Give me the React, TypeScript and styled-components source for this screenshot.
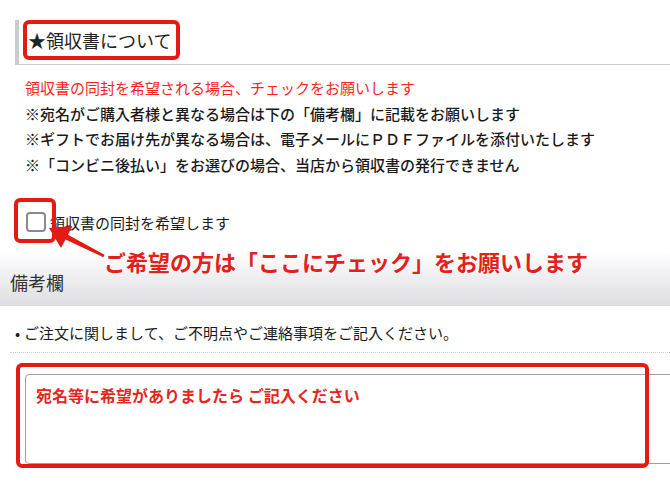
import styled, { createGlobalStyle } from "styled-components";

const GlobalStyle = createGlobalStyle`
  html, body {
    margin: 0;
    padding: 0;
    background: #fff;
    overflow: hidden;
  }
  body {
    font-family: "Noto Sans CJK JP", "Noto Sans", sans-serif;
    color: #222;
  }
`;

const Page = styled.div`
  position: relative;
  width: 670px;
  height: 488px;
  padding-top: 20px;
  box-sizing: border-box;
`;

const HeadingRow = styled.div`
  display: flex;
  align-items: flex-start;
  height: 44px;
  margin-left: 15px;
  border-left: 4px solid #cccccc;
  border-bottom: 1px solid #cccccc;
`;

const HeadingBox = styled.h2`
  margin: 0 0 0 4px;
  height: 40px;
  box-sizing: border-box;
  display: flex;
  align-items: center;
  padding: 0 5px 0 1px;
  border: 4px solid #e41b12;
  border-radius: 6px;
  font-size: 18px;
  font-weight: 400;
  color: #222;
`;

const Notes = styled.div`
  margin-top: 10px;
  padding-left: 25px;
  font-size: 15px;
  line-height: 25.5px;
`;

const Note = styled.p<{ $red?: boolean }>`
  margin: 0;
  white-space: nowrap;
  color: ${(p) => (p.$red ? "#ff1f1f" : "#1a1a1a")};
  font-weight: ${(p) => (p.$red ? 400 : 500)};
`;

const CheckRow = styled.label`
  display: flex;
  align-items: center;
  gap: 4px;
  height: 24px;
  margin-top: 33px;
  padding-left: 26px;
  font-size: 15px;
  color: #1a1a1a;
`;

const CheckBox = styled.input`
  appearance: none;
  margin: 0;
  width: 20px;
  height: 20px;
  box-sizing: border-box;
  border: 2px solid #8a8a8a;
  border-radius: 4px;
  background: #fff;
`;

const Band = styled.div`
  margin-top: 18px;
  height: 54px;
  box-sizing: border-box;
  display: flex;
  align-items: flex-end;
  padding: 0 10px 12px;
  background: linear-gradient(#ffffff 0%, #f2f2f4 35%, #dedee2 100%);
  font-size: 18px;
  line-height: 24px;
  color: #333;
`;

const BulletLine = styled.div`
  display: flex;
  gap: 4px;
  margin: 15px 0 0 10px;
  padding: 0 0 7px 5px;
  border-bottom: 1px dotted #cccccc;
  font-size: 15px;
  line-height: 24px;
  color: #1a1a1a;
  white-space: nowrap;
`;

const MemoBox = styled.textarea`
  display: block;
  margin: 21px 0 0 25px;
  width: 660px;
  height: 90px;
  box-sizing: border-box;
  padding: 8px 10px;
  border: 1px solid #a0a0a0;
  border-radius: 4px;
  resize: none;
  font-family: "Noto Sans CJK JP", sans-serif;
  font-size: 16px;
  line-height: 24px;
  &::placeholder {
    color: #e52520;
    font-weight: 700;
    opacity: 1;
  }
`;

const Highlight = styled.div<{ $x: number; $y: number; $w: number; $h: number }>`
  position: absolute;
  left: ${(p) => p.$x}px;
  top: ${(p) => p.$y}px;
  width: ${(p) => p.$w}px;
  height: ${(p) => p.$h}px;
  box-sizing: border-box;
  border: 4px solid #e41b12;
  border-radius: 6px;
  pointer-events: none;
`;

const Callout = styled.div`
  position: absolute;
  left: 104px;
  top: 247px;
  font-size: 22px;
  line-height: 28px;
  font-weight: 700;
  color: #e4201a;
  white-space: nowrap;
  text-shadow: 0 0 2px #fff, 0 0 2px #fff, 1px 1px 1px #fff;
`;

const Arrow = styled.svg`
  position: absolute;
  left: 0;
  top: 0;
  pointer-events: none;
`;

const App = () => {
  return (
    <>
      <GlobalStyle />
      <Page>
        <HeadingRow>
          <HeadingBox>★領収書について</HeadingBox>
        </HeadingRow>
        <Notes>
          <Note $red>領収書の同封を希望される場合、チェックをお願いします</Note>
          <Note>※宛名がご購入者様と異なる場合は下の「備考欄」に記載をお願いします</Note>
          <Note>※ギフトでお届け先が異なる場合は、電子メールにＰＤＦファイルを添付いたします</Note>
          <Note>※「コンビニ後払い」をお選びの場合、当店から領収書の発行できません</Note>
        </Notes>
        <CheckRow>
          <CheckBox type="checkbox" />
          領収書の同封を希望します
        </CheckRow>
        <Band>備考欄</Band>
        <BulletLine>
          <span>•</span>
          <span>ご注文に関しまして、ご不明点やご連絡事項をご記入ください。</span>
        </BulletLine>
        <MemoBox placeholder="宛名等に希望がありましたら ご記入ください" />

        {/* annotations drawn over the form */}
        <Highlight $x={14} $y={198} $w={42} $h={45} />
        <Highlight $x={16} $y={363} $w={633} $h={105} />
        <Arrow width="120" height="270" viewBox="0 0 120 270">
          <polygon
            points="49,228 72.5,226 68,234.8 104.5,254.8 103.3,257.2 65.5,239.4 61,248"
            fill="#e41b12"
          />
        </Arrow>
        <Callout>ご希望の方は「ここにチェック」をお願いします</Callout>
      </Page>
    </>
  );
};

export default App;
